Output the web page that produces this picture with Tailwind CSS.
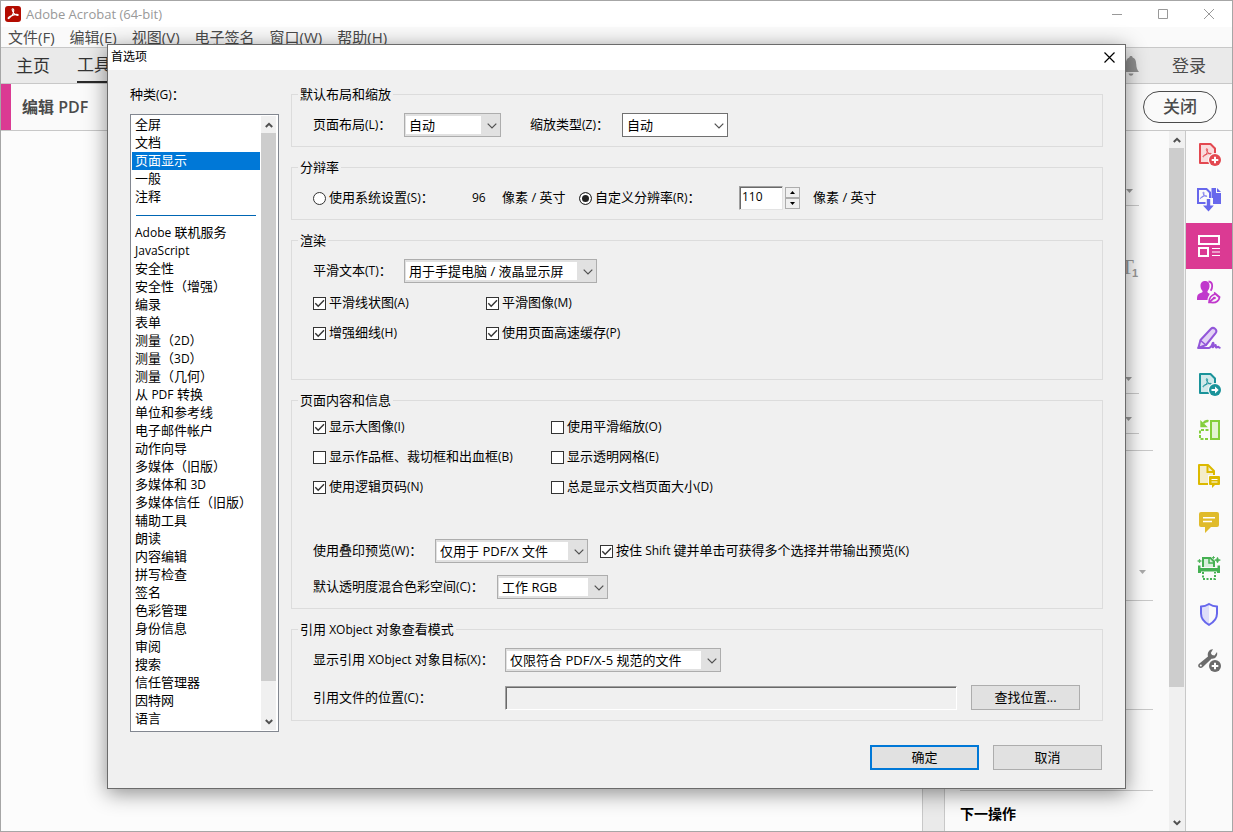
<!DOCTYPE html>
<html lang="zh-CN">
<head>
    <meta charset="UTF-8">
    <meta name="viewport" content="width=device-width, initial-scale=1.0">
    <title>Adobe Acrobat (64-bit)</title>
    <script src="https://cdn.jsdelivr.net/npm/@tailwindcss/browser@4"></script>
</head>
<body class="relative flex h-screen flex-col overflow-hidden border border-[#a6a6a6] bg-[#fafafa] font-['Open_Sans','Noto_Sans_CJK_SC',sans-serif] text-[13px] text-black">

    <!-- Shared symbols -->
    <svg class="hidden">
        <symbol id="chevron" viewBox="0 0 10 6"><path d="M.7.7 5 5 9.3.7" fill="none" stroke="#505050" stroke-width="1.2"/></symbol>
        <symbol id="scroll-up" viewBox="0 0 8 6"><path d="M.8 5 4 1.8 7.2 5" fill="none" stroke="#505050" stroke-width="2"/></symbol>
        <symbol id="scroll-down" viewBox="0 0 8 6"><path d="M.8 1 4 4.2 7.2 1" fill="none" stroke="#505050" stroke-width="2"/></symbol>
        <symbol id="tick" viewBox="0 0 13 13"><path d="M2.300 6.200 5.200 9.300 11 3.200" fill="none" stroke="#333" stroke-width="1.4"/></symbol>
        <symbol id="swoosh" viewBox="0 0 12 12"><path d="M1.4 10.6c-1-.6 1-2.2 3.600-3 1.300-2 2-4.400 1.600-6.100-.4-1.300-1.700-.9-1.400.5.4 2.400 3.300 5.500 5.400 5.400 1.300-.2.600-1.100-.9-1-2 .1-4 .7-5.400 1.700-1 .8-2.100 2.800-2.900 2.500Z" fill="none" stroke="currentColor" stroke-width="1.100"/></symbol>
    </svg>

    <!-- Title bar -->
    <header class="flex h-[26px] shrink-0 items-center bg-white pl-1">
        <svg class="size-4" viewBox="0 0 16 16" color="#fff"><rect width="16" height="16" rx="3" fill="#b30b00"/><use href="#swoosh" x="2" y="2" width="12" height="12"/></svg>
        <h1 class="ml-[5px] text-[13px] leading-4 text-[#999]">Adobe Acrobat (64-bit)</h1>
        <div class="ml-auto flex pr-3.5 pb-px">
            <button class="grid h-[25px] w-[46px] place-items-center" aria-label="最小化"><svg class="w-2.5" viewBox="0 0 10 10"><path d="M0 5.500h10" stroke="#999"/></svg></button>
            <button class="grid h-[25px] w-[46px] place-items-center" aria-label="最大化"><svg class="w-2.5" viewBox="0 0 10 10"><path d="M.5.5h9v9h-9z" fill="none" stroke="#999"/></svg></button>
            <button class="grid h-[25px] w-[32px] place-items-center pl-3.5" aria-label="关闭窗口"><svg class="w-2.5" viewBox="0 0 10 10"><path d="m0 0 10 10M10 0 0 10" stroke="#999"/></svg></button>
        </div>
    </header>

    <!-- Menu bar -->
    <nav class="flex h-[21px] shrink-0 items-center gap-[15px] border-b border-[#c8c8c8] pl-[7px] text-[15px] leading-5 text-[#4b4b4b]">
        <button>文件(F)</button>
        <button>编辑(E)</button>
        <button>视图(V)</button>
        <button>电子签名</button>
        <button>窗口(W)</button>
        <button>帮助(H)</button>
    </nav>

    <!-- Tabs -->
    <nav class="flex h-9 shrink-0 items-stretch border-b border-[#c8c8c8] bg-[#eaeaea] pl-[15px] text-[17px] text-[#333]">
        <button class="mr-[27px]">主页</button>
        <button class="border-b-2 border-[#2b2b2b] pt-px">工具</button>
        <div class="ml-auto flex items-center pr-[26px]">
            <button class="mr-8" aria-label="通知"><svg class="h-5 w-[18px]" viewBox="0 0 18 20" fill="#8f8f8f"><path d="M9 0c1.200 0 1.600.7 1.600 1.500C13.500 2.300 14 5 14.200 8c.2 3.600.8 5.500 2.800 8H1c2-2.500 2.600-4.400 2.800-8C4 5 4.500 2.300 7.400 1.500 7.400.7 7.800 0 9 0ZM6.500 17.500h5c-.5 1.500-1.400 2.200-2.500 2.200s-2-.7-2.500-2.200Z"/></svg></button>
            <button class="text-[#4b4b4b]">登录</button>
        </div>
    </nav>

    <!-- Tool header -->
    <div class="flex h-[47px] shrink-0 items-center border-b border-[#c8c8c8] pr-[15px] text-[#4b4b4b]">
        <div class="h-full w-2.5 bg-[#db3a93]"></div>
        <h2 class="ml-[11px] text-base font-semibold">编辑 PDF</h2>
        <button class="ml-auto h-8 w-[74px] rounded-full border border-[#4b4b4b] text-[17px] leading-6 font-medium">关闭</button>
    </div>

    <!-- Work area -->
    <div class="flex min-h-0 flex-1">
        <main class="flex-1 bg-[#fcfcfc]"></main>
        <div class="w-[23px] border-x border-[#c8c8c8] bg-[#eaeaea]"></div>
        <aside class="flex w-[224px] flex-col pr-4 pl-[15px]">
            <div class="flex h-[320px] flex-col border-b border-[#c8c8c8] pr-3.5">
                <div class="flex h-[75px] items-end justify-end border-b border-[#c8c8c8] pr-1.5 pb-3"><svg class="h-1 w-[7px]" viewBox="0 0 7 4"><path d="M0 0h7L3.500 4z" fill="#999"/></svg></div>
                <div class="mt-[49px] flex h-6 items-end justify-end pr-px font-['Liberation_Serif',serif] text-[22px] leading-6 text-[#999]">T<sub class="bottom-0 -ml-0.5 font-['Liberation_Sans',sans-serif] text-[11px] leading-3 font-bold">1</sub></div>
                <div class="mt-[84px] flex h-[31px] items-start justify-end border-b border-[#c8c8c8] pt-[14px] pr-[7px]"><svg class="h-1 w-[7px]" viewBox="0 0 7 4"><path d="M0 0h7L3.500 4z" fill="#999"/></svg></div>
                <div class="flex h-10 items-end justify-end border-b border-[#c8c8c8] pr-[7px] pb-3"><svg class="h-1 w-[7px]" viewBox="0 0 7 4"><path d="M0 0h7L3.500 4z" fill="#999"/></svg></div>
            </div>
            <div class="flex h-[150px] items-end justify-end border-b border-[#c8c8c8] pr-[7px] pb-[26px]"><svg class="h-1 w-[7px]" viewBox="0 0 7 4"><path d="M0 0h7L3.500 4z" fill="#aaa"/></svg></div>
            <div class="h-[109px] border-b border-[#c8c8c8]"></div>
            <div class="h-[81px] border-b border-[#c8c8c8]"></div>
            <h3 class="pt-[11px] text-sm leading-6 font-bold">下一操作</h3>
        </aside>
        <div class="flex w-4 flex-col items-center bg-[#f0f0f0] pr-px">
            <div class="grid h-[17px] shrink-0 place-items-center"><svg class="h-1.5 w-2"><use href="#scroll-up"/></svg></div>
            <div class="h-[77%] w-full bg-[#cdcdcd]"></div>
            <div class="mt-auto grid h-[17px] shrink-0 place-items-center"><svg class="h-1.5 w-2"><use href="#scroll-down"/></svg></div>
        </div>

        <!-- Tool rail -->
        <nav class="flex w-[47px] flex-col border-l border-[#c8c8c8]">
            <button class="grid h-[46px] place-items-center text-[#e34850]" aria-label="创建 PDF">
                <svg class="size-6" viewBox="0 0 24 24"><path d="M3 2h10.500L18 6.500V21H3z" fill="#f9dcdd" stroke="currentColor" stroke-width="2" stroke-linejoin="round"/><use href="#swoosh" x="5" y="6" width="10" height="10"/><circle cx="18" cy="18" r="7" fill="#fafafa"/><circle cx="18" cy="18" r="6" fill="currentColor"/><path d="M18 14.700v6.600M14.700 18h6.600" stroke="#fff" stroke-width="2"/></svg>
            </button>
            <button class="grid h-[46px] place-items-center text-[#6767ec]" aria-label="合并文件">
                <svg class="size-6" viewBox="0 0 24 24"><path d="M8.500 15H1V1h8.500L13 4.500V10" fill="none" stroke="currentColor" stroke-width="2"/><use href="#swoosh" x="2.500" y="3.500" width="8" height="8"/><path d="M14.500 0H19v5h5v11h-8v-6h-1.500zM20 0l4 4h-4z" fill="currentColor"/><path d="M9.800 11h3.400v6.500h3.600L11.500 23.500 6 17.500h3.800z" fill="currentColor"/></svg>
            </button>
            <button class="grid h-[46px] place-items-center bg-[#db3a93] text-white" aria-label="编辑 PDF" aria-current="true">
                <svg class="size-6" viewBox="0 0 24 24" fill="none" stroke="currentColor" stroke-width="2"><path d="M2 2h20v8H2zM2 14h9v8H2z"/><path d="M15 14.500h8M15 18h8M15 21.500h8" stroke-width="1.200"/></svg>
            </button>
            <button class="grid h-[46px] place-items-center text-[#c038cc]" aria-label="请求电子签名">
                <svg class="size-6" viewBox="0 0 24 24"><path d="M8 1c3.200 0 4.700 2.200 4.500 5.200-.1 2-.9 3.500-1.900 4.700-.5 1 .1 1.900 1.200 2.300 1 .4 1 1 .2 2.200-1 1.500-1.400 2.800-1.500 4.600H0c0-4 .4-5.800 3-6.800 2.200-.8 3.100-1.300 2.400-2.500C4.300 9.400 3.600 8 3.500 6.200 3.400 3.200 4.900 1 8 1Z" fill="currentColor"/><path d="M11.500 1.500c2.500.2 3.700 1.700 3.700 4.500 0 2-.7 3.600-1.500 4.700" fill="none" stroke="currentColor" stroke-width="1.800"/><path d="M12 22.500c0-4.500 2-7.500 6.500-8.500l4 3.500c-.8 4-4 5.500-8.500 5zM12.500 22l5-4.500M17 12.500l6 5" fill="#fafafa" stroke="currentColor" stroke-width="1.700"/><circle cx="17.500" cy="18" r="1.300" fill="currentColor"/></svg>
            </button>
            <button class="grid h-[46px] place-items-center text-[#9256d9]" aria-label="填写和签名">
                <svg class="size-6" viewBox="0 0 24 24" fill="none" stroke="currentColor" stroke-width="2" stroke-linejoin="round" stroke-linecap="round"><path d="M1.300 22 3.500 14 14 2.800c2.400-2.400 6.800 1 4.800 4L9 19z" fill="#e3d3f5"/><path d="m3.500 14.500 5.500 4.500" stroke-width="1.600"/><path d="M1.300 22H12c2.500-.4 3-3.500 3.800-5 .5-.6 1 .2.600 1.200l-1 2.800c.5 1 2.300-2 3.200-2 .8.200-.2 2.200.6 2.600.8.200 1-.8 2-.8.500 0 .6 1 1.500 1"/></svg>
            </button>
            <button class="grid h-[46px] place-items-center text-[#1a939a]" aria-label="导出 PDF">
                <svg class="size-6" viewBox="0 0 24 24"><path d="M3 2h10.500L18 6.500V21H3z" fill="#d1e9ea" stroke="currentColor" stroke-width="2" stroke-linejoin="round"/><use href="#swoosh" x="5" y="6" width="10" height="10"/><circle cx="18" cy="18" r="7" fill="#fafafa"/><circle cx="18" cy="18" r="6" fill="currentColor"/><path d="M14.500 17h3.500v-2.500l3.700 3.500-3.700 3.500V19h-3.500z" fill="#fff"/></svg>
            </button>
            <button class="grid h-[46px] place-items-center text-[#84cf3c]" aria-label="组织页面">
                <svg class="size-6" viewBox="0 0 24 24" fill="none" stroke="currentColor" stroke-width="2"><path d="M14 3h8v18h-8z" fill="#e3f4d3"/><path d="M11.500 12H3v9h8.500" stroke-dasharray="3 1.500"/><path d="M11.500 3.200C9.500 2.700 7.500 3.700 6.500 5.200" stroke-width="2.400"/><path d="M3.300 2v7.300h7.500z" fill="currentColor" stroke="none"/></svg>
            </button>
            <button class="grid h-[46px] place-items-center text-[#dcb900]" aria-label="发送以供注释">
                <svg class="size-6" viewBox="0 0 24 24"><path d="M2 1h9l6 6v13H2z" fill="#f4edc9" stroke="currentColor" stroke-width="2" stroke-linejoin="round"/><path d="M10.500 1v7H17" fill="none" stroke="currentColor" stroke-width="2"/><path d="M11 11h13v11H11z" fill="#fafafa"/><path d="M13 12h9q1 0 1 1v7q0 1-1 1h-4l-3 3v-3h-2q-1 0-1-1v-7q0-1 1-1z" fill="currentColor"/><path d="M14.500 15.500h6M14.500 18h6" stroke="#fff" stroke-width="1.200"/></svg>
            </button>
            <button class="grid h-[46px] place-items-center text-[#e0bb2c]" aria-label="注释">
                <svg class="size-6" viewBox="0 0 24 24"><path d="M4 2h16q2 0 2 2v11q0 2-2 2h-6l-6 6v-6H4q-2 0-2-2V4q0-2 2-2z" fill="currentColor"/><path d="M6 7.700h12M6 11.500h9" stroke="#fff" stroke-width="1.500"/></svg>
            </button>
            <button class="grid h-[46px] place-items-center text-[#45b052]" aria-label="扫描和 OCR">
                <svg class="size-6" viewBox="0 0 24 24" fill="none" stroke="currentColor" stroke-width="2"><path d="M6 11V2h7.500L17 5.500V11" fill="#d9f0dc"/><path d="M12 1.500V7h5.500" stroke-width="1.500"/><path d="M1 9.500h2.500v2.500h17V9.500H23V17h-3v-1.500H4V17H1z" fill="currentColor" stroke="none"/><path d="M6 16v7h12v-7" stroke-dasharray="2 1.500"/><path d="m20.500 1.200.9 2 2 .9-2 .9-.9 2-.9-2-2-.9 2-.9zM2.500 3l.5 1.500 1.500.5-1.500.5L2.500 7 2 5.500.5 5 2 4.500z" fill="currentColor" stroke-width=".6"/><path d="M16.500.2v2.600M15.200 1.500h2.600" stroke-width="1"/></svg>
            </button>
            <button class="grid h-[46px] place-items-center text-[#6767ec]" aria-label="保护">
                <svg class="size-6" viewBox="0 0 24 24"><path d="M12 2v20.500C7 20 4 16 4 11.500V4.500C7 4.500 9.500 3.500 12 2z" fill="#dedef9"/><path d="M12 2c2.500 1.600 5 2.500 8 2.600v7c0 4.800-3 8.600-8 11.200-5-2.600-8-6.400-8-11.200v-7C7 4.500 9.500 3.600 12 2z" fill="none" stroke="currentColor" stroke-width="2"/></svg>
            </button>
            <button class="grid h-[46px] place-items-center text-[#6b6b6b]" aria-label="更多工具">
                <svg class="size-6" viewBox="0 0 24 24"><path d="M16 1.300 13.800 5l1.200 2 2.500.4L20 4c1 3.500-1.300 7.200-5.500 6.700L5.600 19.300c-1.100 1.100-2.700 1-3.700 0s-1-2.600.2-3.600L11 8.500C10 4.500 12.500 1 16 1.300z" fill="currentColor"/><circle cx="3.800" cy="17.500" r="1" fill="#fafafa"/><circle cx="18" cy="18" r="7" fill="#fafafa"/><circle cx="18" cy="18" r="6" fill="currentColor"/><path d="M18 14.700v6.600M14.700 18h6.600" stroke="#fff" stroke-width="2"/></svg>
            </button>
        </nav>
    </div>

    <!-- Preferences dialog -->
    <div role="dialog" aria-labelledby="dialog-title" class="absolute inset-x-[106px] top-[43px] border border-[#6b6b6b] bg-[#f0f0f0] shadow-[0_4px_20px_rgba(0,0,0,0.45)]">
        <div class="flex h-[25px] items-center justify-between bg-white pr-2.5 pb-px pl-[3px]">
            <h2 id="dialog-title" class="text-xs">首选项</h2>
            <button aria-label="关闭对话框"><svg class="size-[11px]" viewBox="0 0 11 11"><path d="m.5.5 10 10M10.500.5l-10 10" stroke="#000" stroke-width="1.200"/></svg></button>
        </div>

        <div class="px-[22px] pt-3.5 pb-[18px]">
            <div class="flex gap-3">
                <!-- Categories -->
                <div class="w-[149px] shrink-0">
                    <p class="leading-5">种类<span class="text-xs">(G)</span>：</p>
                    <div class="mt-2.5 flex border border-[#828790] bg-white p-px">
                        <ul id="categories" class="w-32 pb-0.5"></ul>
                        <div class="ml-px flex w-[15px] flex-col items-center bg-[#f0f0f0]">
                            <div class="grid h-[17px] place-items-center"><svg class="h-1.5 w-2"><use href="#scroll-up"/></svg></div>
                            <div class="h-[548px] w-full bg-[#cdcdcd]"></div>
                            <div class="mt-auto grid h-[17px] place-items-center"><svg class="h-1.5 w-2"><use href="#scroll-down"/></svg></div>
                        </div>
                    </div>
                </div>

                <!-- Settings -->
                <div class="flex min-w-0 flex-1 flex-col gap-2.5">
                    <fieldset class="border border-[#dcdcdc] pb-[9px]">
                        <legend class="ml-1.5 px-0.5 leading-[21px]">默认布局和缩放</legend>
                        <div class="flex h-8 items-center pt-2 pl-[21px]">
                            <label for="layout" class="w-[91px]">页面布局<span class="text-xs">(L)</span>：</label>
                            <div class="relative w-[97px] border border-[#adadad] bg-[#e1e1e1] py-0.5 pr-[19px] pl-px">
                                <select id="layout" class="block h-[18px] w-full appearance-none bg-white pb-px pl-[3px]"><option>自动</option></select>
                                <svg class="pointer-events-none absolute top-[9px] right-[3px] h-1.5 w-2.5"><use href="#chevron"/></svg>
                            </div>
                            <label for="zoom" class="ml-[29px] w-[92px]">缩放类型<span class="text-xs">(Z)</span>：</label>
                            <div class="relative w-[106px] border border-[#707070] bg-white py-0.5 pr-[19px] pl-px">
                                <select id="zoom" class="block h-[18px] w-full appearance-none bg-white pl-[3px]"><option>自动</option></select>
                                <svg class="pointer-events-none absolute top-[9px] right-[3px] h-1.5 w-2.5"><use href="#chevron"/></svg>
                            </div>
                        </div>
                    </fieldset>

                    <fieldset class="border border-[#dcdcdc] pb-[9px]">
                        <legend class="ml-1.5 px-0.5 leading-[21px]">分辩率</legend>
                        <div class="flex h-8 items-center pt-2 pl-[21px]">
                            <label class="flex w-[159px] items-center gap-[3px]"><input type="radio" name="resolution" class="size-[13px] appearance-none rounded-full border border-[#333] bg-white checked:bg-[#222] checked:shadow-[inset_0_0_0_2px_#fff]"><span>使用系统设置<span class="text-xs">(S)</span>：</span></label>
                            <span class="w-[30px] text-xs">96</span>
                            <span class="w-[77px]">像素 / 英寸</span>
                            <label class="flex w-[160px] items-center gap-[3px]"><input type="radio" name="resolution" checked class="size-[13px] appearance-none rounded-full border border-[#333] bg-white checked:bg-[#222] checked:shadow-[inset_0_0_0_2px_#fff]"><span>自定义分辨率<span class="text-xs">(R)</span>：</span></label>
                            <input type="text" value="110" aria-label="自定义分辨率" class="h-6 w-[44px] border border-t-[#a0a0a0] border-r-[#e3e3e3] border-b-[#e3e3e3] border-l-[#a0a0a0] bg-white pb-1 pl-0.5 text-xs shadow-[inset_1px_1px_0_#696969]">
                            <div class="ml-0.5 flex w-[15px] flex-col">
                                <button class="grid h-[11px] place-items-center border border-[#adadad]" aria-label="增加"><svg class="h-[3px] w-[5px]" viewBox="0 0 5 3"><path d="M0 3h5L2.500 0z"/></svg></button>
                                <button class="grid h-[11px] place-items-center border border-[#adadad]" aria-label="减少"><svg class="h-[3px] w-[5px]" viewBox="0 0 5 3"><path d="M0 0h5L2.500 3z"/></svg></button>
                            </div>
                            <span class="ml-[13px]">像素 / 英寸</span>
                        </div>
                    </fieldset>

                    <fieldset class="border border-[#dcdcdc] pb-[31px]">
                        <legend class="ml-1.5 px-0.5 leading-[21px]">渲染</legend>
                        <div class="flex h-8 items-center pt-2 pl-[21px]">
                            <label for="smooth-text" class="w-[91px]">平滑文本<span class="text-xs">(T)</span>：</label>
                            <div class="relative w-[193px] border border-[#adadad] bg-[#e1e1e1] py-0.5 pr-[19px] pl-px">
                                <select id="smooth-text" class="block h-[18px] w-full appearance-none bg-white pb-px pl-[3px]"><option>用于手提电脑 / 液晶显示屏</option></select>
                                <svg class="pointer-events-none absolute top-[9px] right-[3px] h-1.5 w-2.5"><use href="#chevron"/></svg>
                            </div>
                        </div>
                        <div class="mt-[5px] grid auto-rows-[30px] grid-cols-[173px_1fr] items-center pl-[21px]">
                            <label class="relative flex items-center gap-[3px]"><input type="checkbox" checked class="peer size-[13px] appearance-none border border-[#333] bg-white"><svg class="pointer-events-none absolute left-0 hidden size-[13px] peer-checked:block"><use href="#tick"/></svg><span>平滑线状图<span class="text-xs">(A)</span></span></label>
                            <label class="relative flex items-center gap-[3px]"><input type="checkbox" checked class="peer size-[13px] appearance-none border border-[#333] bg-white"><svg class="pointer-events-none absolute left-0 hidden size-[13px] peer-checked:block"><use href="#tick"/></svg><span>平滑图像<span class="text-xs">(M)</span></span></label>
                            <label class="relative flex items-center gap-[3px]"><input type="checkbox" checked class="peer size-[13px] appearance-none border border-[#333] bg-white"><svg class="pointer-events-none absolute left-0 hidden size-[13px] peer-checked:block"><use href="#tick"/></svg><span>增强细线<span class="text-xs">(H)</span></span></label>
                            <label class="relative flex items-center gap-[3px]"><input type="checkbox" checked class="peer size-[13px] appearance-none border border-[#333] bg-white"><svg class="pointer-events-none absolute left-0 hidden size-[13px] peer-checked:block"><use href="#tick"/></svg><span>使用页面高速缓存<span class="text-xs">(P)</span></span></label>
                        </div>
                    </fieldset>

                    <fieldset class="border border-[#dcdcdc] pb-[9px]">
                        <legend class="ml-1.5 px-0.5 leading-[21px]">页面内容和信息</legend>
                        <div class="mt-px grid auto-rows-[30px] grid-cols-[238px_1fr] items-center pl-[21px]">
                            <label class="relative flex items-center gap-[3px]"><input type="checkbox" checked class="peer size-[13px] appearance-none border border-[#333] bg-white"><svg class="pointer-events-none absolute left-0 hidden size-[13px] peer-checked:block"><use href="#tick"/></svg><span>显示大图像<span class="text-xs">(I)</span></span></label>
                            <label class="relative flex items-center gap-[3px]"><input type="checkbox" class="peer size-[13px] appearance-none border border-[#333] bg-white"><svg class="pointer-events-none absolute left-0 hidden size-[13px] peer-checked:block"><use href="#tick"/></svg><span>使用平滑缩放<span class="text-xs">(O)</span></span></label>
                            <label class="relative flex items-center gap-[3px]"><input type="checkbox" class="peer size-[13px] appearance-none border border-[#333] bg-white"><svg class="pointer-events-none absolute left-0 hidden size-[13px] peer-checked:block"><use href="#tick"/></svg><span>显示作品框、裁切框和出血框<span class="text-xs">(B)</span></span></label>
                            <label class="relative flex items-center gap-[3px]"><input type="checkbox" class="peer size-[13px] appearance-none border border-[#333] bg-white"><svg class="pointer-events-none absolute left-0 hidden size-[13px] peer-checked:block"><use href="#tick"/></svg><span>显示透明网格<span class="text-xs">(E)</span></span></label>
                            <label class="relative flex items-center gap-[3px]"><input type="checkbox" checked class="peer size-[13px] appearance-none border border-[#333] bg-white"><svg class="pointer-events-none absolute left-0 hidden size-[13px] peer-checked:block"><use href="#tick"/></svg><span>使用逻辑页码<span class="text-xs">(N)</span></span></label>
                            <label class="relative flex items-center gap-[3px]"><input type="checkbox" class="peer size-[13px] appearance-none border border-[#333] bg-white"><svg class="pointer-events-none absolute left-0 hidden size-[13px] peer-checked:block"><use href="#tick"/></svg><span>总是显示文档页面大小<span class="text-xs">(D)</span></span></label>
                        </div>
                        <div class="mt-[37px] flex h-6 items-center pl-[21px]">
                            <label for="overprint" class="w-[122px]">使用叠印预览<span class="text-xs">(W)</span>：</label>
                            <div class="relative w-[153px] border border-[#adadad] bg-[#e1e1e1] py-0.5 pr-[19px] pl-px">
                                <select id="overprint" class="block h-[18px] w-full appearance-none bg-white pb-px pl-[3px]"><option>仅用于 PDF/X 文件</option></select>
                                <svg class="pointer-events-none absolute top-[9px] right-[3px] h-1.5 w-2.5"><use href="#chevron"/></svg>
                            </div>
                            <label class="relative ml-3 flex items-center gap-[3px]"><input type="checkbox" checked class="peer size-[13px] appearance-none border border-[#333] bg-white"><svg class="pointer-events-none absolute left-0 hidden size-[13px] peer-checked:block"><use href="#tick"/></svg><span>按住<span class="text-xs"> Shift </span>键并单击可获得多个选择并带输出预览<span class="text-xs">(K)</span></span></label>
                        </div>
                        <div class="mt-3 flex h-6 items-center pl-[21px]">
                            <label for="blend" class="w-[184px]">默认透明度混合色彩空间<span class="text-xs">(C)</span>：</label>
                            <div class="relative w-[111px] border border-[#adadad] bg-[#e1e1e1] py-0.5 pr-[19px] pl-px">
                                <select id="blend" class="block h-[18px] w-full appearance-none bg-white pb-px pl-[3px]"><option>工作 RGB</option></select>
                                <svg class="pointer-events-none absolute top-[9px] right-[3px] h-1.5 w-2.5"><use href="#chevron"/></svg>
                            </div>
                        </div>
                    </fieldset>

                    <fieldset class="border border-[#dcdcdc] pb-2.5">
                        <legend class="ml-1.5 px-0.5 leading-[21px]">引用<span class="text-xs"> XObject </span>对象查看模式</legend>
                        <div class="flex h-8 items-center pt-2 pl-[21px]">
                            <label for="target" class="w-[192px]">显示引用<span class="text-xs"> XObject </span>对象目标<span class="text-xs">(X)</span>：</label>
                            <div class="relative w-[216px] border border-[#adadad] bg-[#e1e1e1] py-0.5 pr-[19px] pl-px">
                                <select id="target" class="block h-[18px] w-full appearance-none bg-white pb-px pl-[3px]"><option>仅限符合 PDF/X-5 规范的文件</option></select>
                                <svg class="pointer-events-none absolute top-[9px] right-[3px] h-1.5 w-2.5"><use href="#chevron"/></svg>
                            </div>
                        </div>
                        <div class="mt-[13px] flex items-center pr-[22px] pl-[21px]">
                            <label for="location" class="w-[192px]">引用文件的位置<span class="text-xs">(C)</span>：</label>
                            <input id="location" type="text" class="h-6 min-w-0 flex-1 border border-t-[#a0a0a0] border-r-white border-b-white border-l-[#a0a0a0] bg-[#f0f0f0] shadow-[inset_1px_1px_0_#696969]">
                            <button class="ml-3.5 h-[25px] w-[109px] border border-[#adadad] bg-[#e1e1e1] leading-[21px]">查找位置...</button>
                        </div>
                    </fieldset>
                </div>
            </div>

            <div class="mt-[13px] flex justify-end gap-3.5 pr-px">
                <button class="h-[25px] w-[109px] border-2 border-[#0078d7] bg-[#e1e1e1] leading-[19px]">确定</button>
                <button class="h-[25px] w-[109px] border border-[#adadad] bg-[#e1e1e1] leading-[21px]">取消</button>
            </div>
        </div>
    </div>

    <script>
        // An empty entry is the rule between the frequent and the remaining categories
        const categories = [
            "全屏", "文档", "页面显示", "一般", "注释", "",
            "Adobe 联机服务", "JavaScript", "安全性", "安全性（增强）", "编录", "表单",
            "测量（2D）", "测量（3D）", "测量（几何）", "从 PDF 转换", "单位和参考线",
            "电子邮件帐户", "动作向导", "多媒体（旧版）", "多媒体和 3D", "多媒体信任（旧版）",
            "辅助工具", "朗读", "内容编辑", "拼写检查", "签名", "色彩管理", "身份信息",
            "审阅", "搜索", "信任管理器", "因特网", "语言"
        ];
        const list = document.getElementById("categories");

        categories.forEach(name => {
            const item = document.createElement("li");
            if (!name) {
                item.className = "flex h-[18px] items-center px-1";
                item.innerHTML = '<hr class="w-full border-t border-[#0066b4]">';
            } else {
                const selected = name === "页面显示";
                // Latin runs are set one size smaller than the Chinese text
                const text = name.replace(/[A-Za-z0-9]+/g, run => `<span class="text-xs">${run}</span>`);
                item.innerHTML = `<button class="${selected ? "bg-[#0078d7] text-white" : "text-black"} block h-[18px] w-full pb-0.5 pl-[3px] text-left leading-4 whitespace-nowrap">${text}</button>`;
            }
            list.appendChild(item);
        });
    </script>
</body>
</html>
